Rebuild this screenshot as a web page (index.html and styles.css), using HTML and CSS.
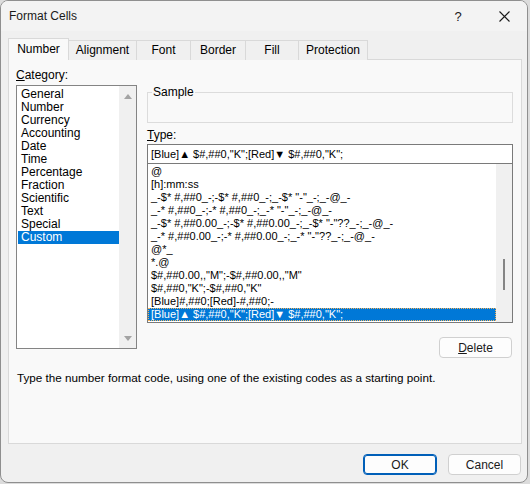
FILE: index.html
```html
<!DOCTYPE html>
<html lang="en">
<head>
  <meta charset="UTF-8" />
  <title>Format Cells</title>
  <link rel="stylesheet" href="styles.css">
</head>
<body>

  <div class="window">
    <div class="titlebar">
      <span class="title">Format Cells</span>
      <span class="caption-btn">?</span>
      <span class="caption-btn">
        <svg width="11" height="11" viewBox="0 0 11 11">
          <path d="M0.5 0.5 L10.5 10.5 M10.5 0.5 L0.5 10.5" stroke="#1b1b1b" stroke-width="1.1" fill="none"/>
        </svg>
      </span>
    </div>

    <div class="tabs">
      <div class="tab active tab-number">Number</div>
      <div class="tab tab-alignment">Alignment</div>
      <div class="tab tab-font">Font</div>
      <div class="tab tab-border">Border</div>
      <div class="tab tab-fill">Fill</div>
      <div class="tab tab-protection">Protection</div>
    </div>

    <div class="panel">
      <div class="panel-main">
        <div class="col-left">
          <div class="label"><u>C</u>ategory:</div>
          <div class="listbox">
            <ul class="category-list">
              <li>General</li>
              <li>Number</li>
              <li>Currency</li>
              <li>Accounting</li>
              <li>Date</li>
              <li>Time</li>
              <li>Percentage</li>
              <li>Fraction</li>
              <li>Scientific</li>
              <li>Text</li>
              <li>Special</li>
              <li class="selected">Custom</li>
            </ul>
            <div class="scroll-arrows">
              <span class="arrow-up"></span>
              <span class="arrow-down"></span>
            </div>
          </div>
        </div>

        <div class="col-right">
          <fieldset class="sample">
            <legend>Sample</legend>
            <div class="sample-body"></div>
          </fieldset>

          <div class="label type-label"><u>T</u>ype:</div>
          <div class="type-input">[Blue]▲ $#,##0,"K";[Red]▼ $#,##0,"K";</div>

          <div class="format-box">
            <ul class="format-list">
              <li>@</li>
              <li>[h]:mm:ss</li>
              <li>_-$* #,##0_-;-$* #,##0_-;_-$* "-"_-;_-@_-</li>
              <li>_-* #,##0_-;-* #,##0_-;_-* "-"_-;_-@_-</li>
              <li>_-$* #,##0.00_-;-$* #,##0.00_-;_-$* "-"??_-;_-@_-</li>
              <li>_-* #,##0.00_-;-* #,##0.00_-;_-* "-"??_-;_-@_-</li>
              <li>@*_</li>
              <li>*.@</li>
              <li>$#,##0.00,,"M";-$#,##0.00,,"M"</li>
              <li>$#,##0,"K";-$#,##0,"K"</li>
              <li>[Blue]#,##0;[Red]-#,##0;-</li>
              <li class="selected">[Blue]▲ $#,##0,"K";[Red]▼ $#,##0,"K";</li>
            </ul>
            <div class="vscroll">
              <div class="thumb"></div>
            </div>
          </div>

          <div class="delete-row">
            <button class="btn"><u>D</u>elete</button>
          </div>
        </div>
      </div>

      <p class="hint">Type the number format code, using one of the existing codes as a starting point.</p>
    </div>

    <div class="footer">
      <button class="btn btn-default">OK</button>
      <button class="btn">Cancel</button>
    </div>
  </div>

</body>
</html>
```

FILE: styles.css
```css
html, body {
  margin: 0;
  padding: 0;
  background-color: #dcdcdc;
}

body {
  font-family: 'Liberation Sans', Arial, sans-serif;
  font-size: 12px;
  color: #000;
}

.window {
  width: 528px;
  height: 483px;
  box-sizing: border-box;
  border: 1px solid #8f8f8f;
  border-radius: 8px;
  background-color: #f0f0f0;
  overflow: hidden;
}

.titlebar {
  height: 30px;
  display: flex;
  align-items: center;
  background-color: #f3f3f3;
}

.title {
  flex: 1;
  padding-left: 8px;
  color: #1a1a1a;
}

.caption-btn {
  width: 46px;
  height: 30px;
  display: flex;
  align-items: center;
  justify-content: center;
  font-size: 13px;
  color: #1a1a1a;
}

/* tabs */

.tabs {
  display: flex;
  align-items: flex-end;
  margin: 7px 0 0 7px;
  height: 22px;
}

.tab {
  box-sizing: border-box;
  height: 20px;
  border: 1px solid #d9d9d9;
  border-bottom: none;
  margin-right: -1px;
  background-color: #f0f0f0;
  text-align: center;
  line-height: 18px;
}

.tab.active {
  height: 22px;
  background-color: #f9f9f9;
  position: relative;
  z-index: 2;
  line-height: 20px;
}

.tab-number { width: 61px; }
.tab-alignment { width: 69px; }
.tab-font { width: 55px; }
.tab-border { width: 56px; }
.tab-fill { width: 54px; }
.tab-protection { width: 70px; }

/* panel */

.panel {
  box-sizing: border-box;
  width: 514px;
  height: 385px;
  margin: -1px 0 0 7px;
  border: 1px solid #d9d9d9;
  background-color: #f9f9f9;
  padding: 8px 8px 0 7px;
}

.panel-main {
  display: grid;
  grid-template-columns: 121px 366px;
  column-gap: 10px;
  height: 290px;
}

.label {
  line-height: 15px;
  height: 15px;
}

.listbox {
  box-sizing: border-box;
  margin-top: 2px;
  height: 264px;
  border: 1px solid #848484;
  background-color: #fff;
  display: flex;
}

.category-list {
  list-style: none;
  margin: 0;
  padding: 2px 0 0 1px;
  flex: 1;
}

.category-list li {
  height: 13px;
  line-height: 13px;
  padding-left: 3px;
}

.category-list li.selected {
  background-color: #0078d7;
  color: #fff;
}

.scroll-arrows {
  width: 17px;
  background-color: #f0f0f0;
  display: flex;
  flex-direction: column;
  justify-content: space-between;
  align-items: center;
  padding: 8px 0 7px;
}

.arrow-up {
  border-left: 4px solid transparent;
  border-right: 4px solid transparent;
  border-bottom: 5px solid #a3a3a3;
}

.arrow-down {
  border-left: 4px solid transparent;
  border-right: 4px solid transparent;
  border-top: 5px solid #a3a3a3;
}

/* right column */

.sample {
  margin: 18px 0 0 0;
  padding: 0;
  border: 1px solid #dcdcdc;
}

.sample legend {
  margin-left: 4px;
  padding: 0 1px;
  line-height: 13px;
}

.sample-body {
  height: 23px;
}

.type-label {
  margin-top: 6px;
  line-height: 13px;
  height: 13px;
  margin-bottom: 2px;
}

.type-input {
  box-sizing: border-box;
  height: 20px;
  border: 1px solid #7a7a7a;
  background-color: #fff;
  padding-left: 3px;
  font-size: 11px;
  line-height: 18px;
  white-space: nowrap;
}

.format-box {
  box-sizing: border-box;
  height: 160px;
  margin-top: -1px;
  border: 1px solid #7a7a7a;
  background-color: #fff;
  display: flex;
}

.format-list {
  list-style: none;
  margin: 0;
  padding: 1px 0 0 0;
  flex: 1;
  font-size: 11px;
}

.format-list li {
  height: 13px;
  line-height: 13px;
  padding-left: 3px;
  white-space: nowrap;
}

.format-list li.selected {
  background-color: #0078d7;
  color: #fff;
  outline: 1px dotted #f7b35a;
  outline-offset: -1px;
}

.vscroll {
  width: 16px;
  background-color: #f0f0f0;
  display: flex;
  justify-content: center;
  padding-top: 95px;
}

.thumb {
  width: 2px;
  height: 31px;
  background-color: #858585;
}

.delete-row {
  display: flex;
  justify-content: flex-end;
  margin-top: 14px;
  padding-right: 1px;
}

.btn {
  box-sizing: border-box;
  width: 73px;
  height: 21px;
  border: 1px solid #d0d0d0;
  border-radius: 4px;
  background-color: #fdfdfd;
  font-family: 'Liberation Sans', Arial, sans-serif;
  font-size: 12px;
  color: #1a1a1a;
  padding: 0;
}

.hint {
  margin: 12px 0 0 1px;
  line-height: 15px;
  font-size: 11.7px;
}

/* footer */

.footer {
  display: flex;
  justify-content: flex-end;
  gap: 11px;
  margin-top: 10px;
  padding-right: 6px;
}

.btn-default {
  width: 74px;
  border-color: #005fb8;
  box-shadow: inset 0 0 0 1px #005fb8;
}
```
